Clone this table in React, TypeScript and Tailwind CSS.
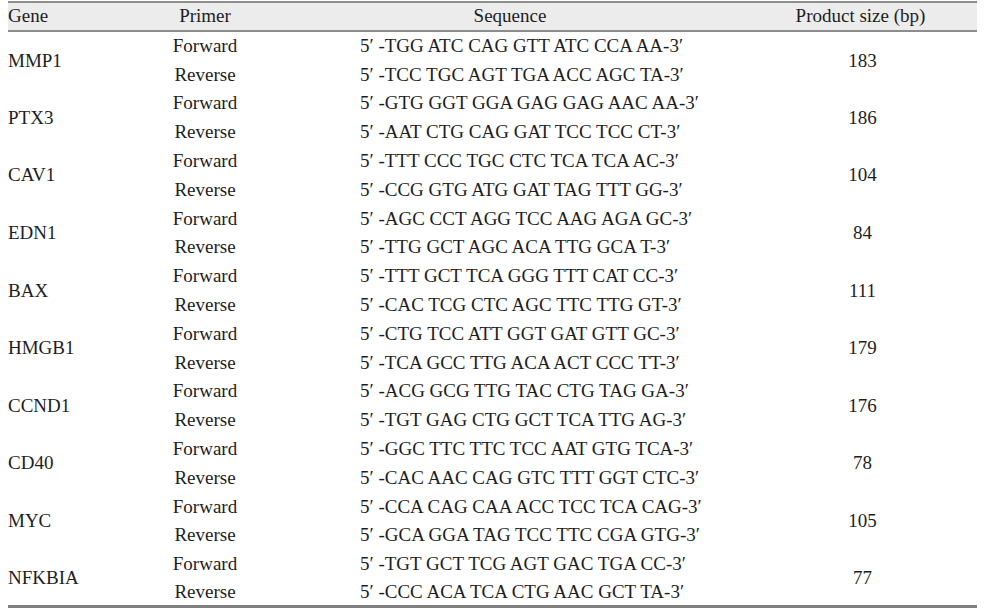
import React from "react";

const rows = [
  { gene: "MMP1", fwd: "TGG ATC CAG GTT ATC CCA AA", rev: "TCC TGC AGT TGA ACC AGC TA", size: "183" },
  { gene: "PTX3", fwd: "GTG GGT GGA GAG GAG AAC AA", rev: "AAT CTG CAG GAT TCC TCC CT", size: "186" },
  { gene: "CAV1", fwd: "TTT CCC TGC CTC TCA TCA AC", rev: "CCG GTG ATG GAT TAG TTT GG", size: "104" },
  { gene: "EDN1", fwd: "AGC CCT AGG TCC AAG AGA GC", rev: "TTG GCT AGC ACA TTG GCA T", size: "84" },
  { gene: "BAX", fwd: "TTT GCT TCA GGG TTT CAT CC", rev: "CAC TCG CTC AGC TTC TTG GT", size: "111" },
  { gene: "HMGB1", fwd: "CTG TCC ATT GGT GAT GTT GC", rev: "TCA GCC TTG ACA ACT CCC TT", size: "179" },
  { gene: "CCND1", fwd: "ACG GCG TTG TAC CTG TAG GA", rev: "TGT GAG CTG GCT TCA TTG AG", size: "176" },
  { gene: "CD40", fwd: "GGC TTC TTC TCC AAT GTG TCA", rev: "CAC AAC CAG GTC TTT GGT CTC", size: "78" },
  { gene: "MYC", fwd: "CCA CAG CAA ACC TCC TCA CAG", rev: "GCA GGA TAG TCC TTC CGA GTG", size: "105" },
  { gene: "NFKBIA", fwd: "TGT GCT TCG AGT GAC TGA CC", rev: "CCC ACA TCA CTG AAC GCT TA", size: "77" },
];

export default function App() {
  return (
    <div className="bg-white w-[984px] h-[608px] pt-[1px] pl-[8px] text-[#1e1e1e] font-['Liberation_Serif',serif] text-[19px]">
      <table className="w-[969px] table-fixed border-collapse">
        <colgroup>
          <col className="w-[130px]" />
          <col className="w-[134px]" />
          <col className="w-[476px]" />
          <col className="w-[229px]" />
        </colgroup>
        <thead>
          <tr className="h-[29px] bg-[#ececec]">
            <th className="border-y-2 border-[#8c8c8c] text-left font-normal leading-none pb-[2px]">Gene</th>
            <th className="border-y-2 border-[#8c8c8c] text-center font-normal leading-none pb-[2px]">Primer</th>
            <th className="border-y-2 border-[#8c8c8c] text-center font-normal leading-none pb-[2px]">Sequence</th>
            <th className="border-y-2 border-[#8c8c8c] text-center font-normal leading-none pb-[2px] pr-[4px]">Product size (bp)</th>
          </tr>
        </thead>
        <tbody>
          {rows.map((r, i) => {
            const last = i === rows.length - 1;
            return (
              <React.Fragment key={r.gene}>
                <tr className="h-[28.8px]">
                  <td rowSpan={2} className={"text-left leading-none" + (last ? " border-b-[3px] border-[#808080]" : "")}>{r.gene}</td>
                  <td className="text-center leading-none">Forward</td>
                  <td className="leading-none pl-[88px]">5′ -{r.fwd}-3′</td>
                  <td rowSpan={2} className={"text-center leading-none" + (last ? " border-b-[3px] border-[#808080]" : "")}>{r.size}</td>
                </tr>
                <tr className="h-[28.8px]">
                  <td className={"text-center leading-none" + (last ? " border-b-[3px] border-[#808080]" : "")}>Reverse</td>
                  <td className={"leading-none pl-[88px]" + (last ? " border-b-[3px] border-[#808080]" : "")}>5′ -{r.rev}-3′</td>
                </tr>
              </React.Fragment>
            );
          })}
        </tbody>
      </table>
    </div>
  );
}
